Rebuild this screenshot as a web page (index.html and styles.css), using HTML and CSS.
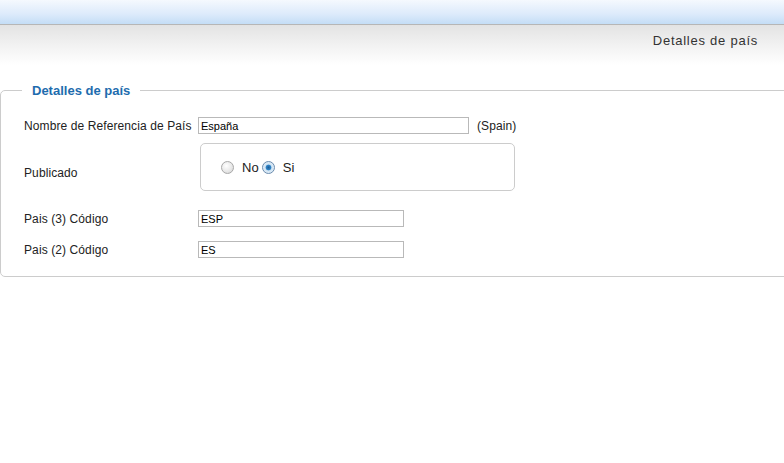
FILE: index.html
```html
<!DOCTYPE html>
<html>
<head>
<meta charset="utf-8">
<link rel="stylesheet" href="styles.css">
</head>
<body>

<div class="topbar"></div>
<div class="toolbar">
  <span class="page-title">Detalles de país</span>
</div>

<form class="adminform">
  <fieldset class="details">
    <legend>Detalles de país</legend>

    <div class="row row-name">
      <label for="name">Nombre de Referencia de País</label>
      <div class="field">
        <input type="text" id="name" class="inp-long" value="España">
        <span class="hint">(Spain)</span>
      </div>
    </div>

    <div class="row row-pub">
      <label class="lbl-pub">Publicado</label>
      <div class="radiobox">
        <input type="radio" id="pub0" name="published" value="0">
        <label for="pub0" class="opt">No</label>
        <input type="radio" id="pub1" name="published" value="1" checked>
        <label for="pub1" class="opt">Si</label>
      </div>
    </div>

    <div class="row row-code3">
      <label for="code3">Pais (3) Código</label>
      <input type="text" id="code3" class="inp-short" value="ESP">
    </div>

    <div class="row row-code2">
      <label for="code2">Pais (2) Código</label>
      <input type="text" id="code2" class="inp-short" value="ES">
    </div>
  </fieldset>
</form>

</body>
</html>
```

FILE: styles.css
```css
html, body {
  margin: 0;
  padding: 0;
  background: #fff;
  font-family: Arial, "Liberation Sans", Helvetica, sans-serif;
  font-size: 12px;
  color: #222;
  overflow: hidden;
}

/* blue strip on top */
.topbar {
  height: 24px;
  background: linear-gradient(to bottom, #f5f9fe 0%, #dceafb 60%, #c4ddf6 100%);
  border-bottom: 1px solid #b6b6b6;
}

/* grey toolbar with the page title */
.toolbar {
  height: 40px;
  background: linear-gradient(to bottom, #e3e3e3 0%, #f3f3f3 55%, #fff 100%);
  display: flex;
  justify-content: flex-end;
  padding-right: 26px;
}

.page-title {
  font-size: 13px;
  letter-spacing: 0.75px;
  color: #333;
  margin-top: 8px;
}

.adminform {
  margin-top: 18px;
}

/* Form box */
.details {
  margin: 0;
  width: 820px;
  border: 1px solid #ccc;
  border-radius: 5px;
  padding: 19px 0 18px 23px;
  box-sizing: border-box;
}

.details legend {
  margin-left: -2px;
  padding: 0 10px;
  font-size: 13px;
  font-weight: bold;
  color: #1e6cae;
}

.row {
  display: grid;
  grid-template-columns: 174px auto;
  align-items: center;
  letter-spacing: 0.1px;
}

.row label {
  color: #222;
}

.field {
  display: flex;
  align-items: center;
}

input[type=text] {
  height: 17px;
  box-sizing: border-box;
  border: 1px solid #b9b9b9;
  padding: 0 2px;
  margin: 0;
  font-family: Arial, "Liberation Sans", sans-serif;
  font-size: 11px;
  color: #000;
}

.inp-long {
  width: 271px;
}

.inp-short {
  width: 206px;
}

.hint {
  margin-left: 8px;
}

.row-pub {
  margin-top: 9px;
}

.lbl-pub {
  margin-top: 11px;
}

.radiobox {
  margin-left: 2px;
  width: 315px;
  height: 48px;
  box-sizing: border-box;
  border: 1px solid #ccc;
  border-radius: 5px;
  display: flex;
  align-items: center;
  padding: 0 0 0 20px;
}

.radiobox .opt {
  font-size: 13px;
  margin-left: 8px;
  margin-right: 3px;
}

input[type=radio] {
  -webkit-appearance: none;
  appearance: none;
  width: 13px;
  height: 13px;
  margin: 0;
  border-radius: 50%;
  border: 1px solid #a8a8a8;
  background: radial-gradient(circle at 40% 35%, #fff 0%, #e6e6e6 60%, #cfcfcf 100%);
  box-sizing: border-box;
}

input[type=radio]:checked {
  border-color: #6a8cae;
  background: radial-gradient(circle at 50% 50%, #1f5c96 0%, #2f86c9 32%, #cfe3f3 42%, #eef4fa 100%);
}

.row-code3 {
  margin-top: 19px;
}

.row-code2 {
  margin-top: 14px;
}
```
